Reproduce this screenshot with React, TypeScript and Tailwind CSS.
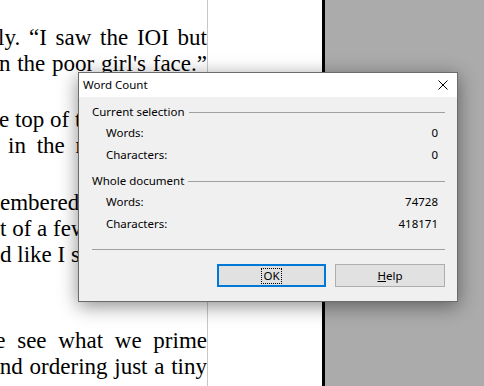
import type { ReactNode } from "react";

function RightLine({ children, className = "" }: { children: ReactNode; className?: string }) {
  return (
    <div className={`flex h-[26px] justify-end overflow-hidden ${className}`}>
      <span className="shrink-0 whitespace-nowrap">{children}</span>
    </div>
  );
}

function LeftLine({ children, className = "" }: { children: ReactNode; className?: string }) {
  return (
    <div className={`flex h-[26px] justify-start overflow-hidden ${className}`}>
      <span className="shrink-0 whitespace-nowrap">{children}</span>
    </div>
  );
}

function GroupHeader({ title, className = "" }: { title: string; className?: string }) {
  return (
    <div className={`flex h-[16px] items-center ${className}`}>
      <span className="whitespace-nowrap">{title}</span>
      <div className="ml-[4px] h-px flex-1 bg-[#a0a0a0]" />
    </div>
  );
}

function StatRow({ label, value, className = "" }: { label: string; value: string; className?: string }) {
  return (
    <div className={`flex h-[16px] items-center justify-between pl-[14px] pr-[7px] ${className}`}>
      <span>{label}</span>
      <span>{value}</span>
    </div>
  );
}

function WordCountDialog() {
  return (
    <div className="absolute left-[78px] top-[72px] flex h-[230px] w-[380px] flex-col border border-[#6b6b6b] bg-[#f0f0f0] font-['Noto_Sans',sans-serif] text-[11.5px] text-black shadow-[0_4px_18px_rgba(0,0,0,0.45)]">
      {/* Title bar */}
      <div className="flex h-[24px] shrink-0 items-center justify-between bg-white pl-[4px] pr-[9px]">
        <span>Word Count</span>
        <svg width="10" height="10" viewBox="0 0 10 10" className="block">
          <path d="M0.5 0.5 L9.5 9.5 M9.5 0.5 L0.5 9.5" stroke="#000" strokeWidth="1" />
        </svg>
      </div>

      {/* Body */}
      <div className="flex flex-1 flex-col pl-[13px] pr-[12px]">
        <GroupHeader title="Current selection" className="mt-[7px]" />
        <StatRow label="Words:" value="0" className="mt-[5px]" />
        <StatRow label="Characters:" value="0" className="mt-[6px]" />

        <GroupHeader title="Whole document" className="mt-[10px]" />
        <StatRow label="Words:" value="74728" className="mt-[5px]" />
        <StatRow label="Characters:" value="418171" className="mt-[6px]" />

        <div className="mt-[17px] h-px bg-[#a0a0a0]" />

        <div className="mt-[14px] flex justify-end gap-[9px]">
          <button className="flex h-[23px] w-[109px] items-center justify-center border-2 border-[#0078d7] bg-[#e1e1e1]">
            <span className="border border-dotted border-black px-[1px] leading-[14px]">OK</span>
          </button>
          <button className="flex h-[23px] w-[110px] items-center justify-center border border-[#adadad] bg-[#e1e1e1]">
            <span>
              <span className="underline">H</span>elp
            </span>
          </button>
        </div>
      </div>
    </div>
  );
}

export default function App() {
  return (
    <div className="relative flex h-[386px] w-[484px] overflow-hidden bg-white">
      {/* Document page text column */}
      <div className="w-[208px] shrink-0 border-r border-[#c8c8c8] bg-white pt-[25px] font-['Liberation_Serif',serif] text-[23px] leading-[26px] text-black">
        <RightLine className="[word-spacing:3px]">quietly. “I saw the IOI but</RightLine>
        <RightLine className="[word-spacing:1px]">on the poor girl's face.”</RightLine>

        <LeftLine className="mt-[30px] ml-[-1px]">e top of the stairs</LeftLine>
        <LeftLine className="ml-[8px] [word-spacing:5px]">in the room</LeftLine>

        <LeftLine className="mt-[31px]">embered the</LeftLine>
        <LeftLine>t of a few things</LeftLine>
        <LeftLine>d like I said</LeftLine>

        <RightLine className="mt-[60px] [word-spacing:6px]">We see what we prime</RightLine>
        <RightLine className="[word-spacing:1px]">and ordering just a tiny</RightLine>
      </div>
      <div className="w-[114px] shrink-0 bg-white" />
      <div className="w-[3px] shrink-0 bg-black" />
      <div className="flex-1 bg-[#ababab]" />

      <WordCountDialog />
    </div>
  );
}
